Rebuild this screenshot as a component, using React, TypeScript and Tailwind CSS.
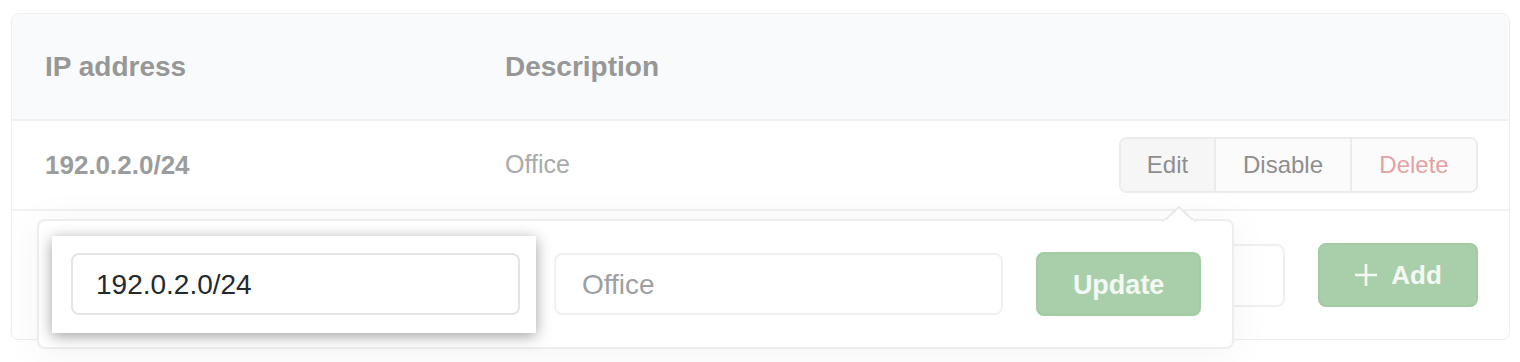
import React from 'react';

const font = { fontFamily: '"Liberation Sans", Arial, sans-serif' };

function PlusIcon() {
  return (
    <svg width="24" height="24" viewBox="0 0 24 24" className="shrink-0">
      <path d="M12 1v22M1 12h22" stroke="#f4f8f4" strokeWidth="2.6" />
    </svg>
  );
}

export default function App() {
  return (
    <div className="min-h-[362px] bg-white pt-[13px] pl-[11px] pr-[10px]" style={font}>
      {/* Table card */}
      <div className="relative w-[1499px] rounded-lg border border-[#eceef0]">
        {/* Header */}
        <div className="flex h-[107px] items-center rounded-t-lg border-b-2 border-[#f0f1f3] bg-[#f9fafb] px-[33px] text-[28px] font-bold text-[#979797]">
          <div className="w-[460px]">IP address</div>
          <div>Description</div>
        </div>

        {/* Row */}
        <div className="flex h-[90px] items-center border-b-2 border-[#f1f2f3] pl-[33px] pr-[31px]">
          <div className="w-[460px] text-[26px] font-bold text-[#9b9c9d]">192.0.2.0/24</div>
          <div className="text-[25px] text-[#a9aaab]">Office</div>
          <div className="ml-auto flex h-[56px] overflow-hidden rounded-lg border-2 border-[#ebebeb] text-[24px] text-[#8e8e8e]">
            <div className="flex w-[95px] items-center justify-center border-r-2 border-[#ebebeb] bg-[#f6f6f6]">Edit</div>
            <div className="flex w-[136px] items-center justify-center border-r-2 border-[#ebebeb] bg-[#fbfbfb]">Disable</div>
            <div className="flex w-[124px] items-center justify-center bg-[#fbfbfb] text-[#e3a1a4]">Delete</div>
          </div>
        </div>

        {/* Add row */}
        <div className="flex h-[128px] items-center gap-[33px] pl-[33px] pr-[31px]">
          <div className="h-[63px] flex-1 rounded-lg border-2 border-[#f0f0f0]" />
          <div className="h-[63px] flex-1 rounded-lg border-2 border-[#f0f0f0]" />
          <div className="flex h-[64px] w-[160px] items-center justify-center gap-[13px] rounded-lg border-2 border-[#a2caa3] bg-[#a9cfaa] text-[26px] font-bold text-[#f4f8f4]">
            <PlusIcon />
            Add
          </div>
        </div>

        {/* Edit popover */}
        <div className="absolute left-[25px] top-[205px] flex h-[130px] w-[1197px] items-center rounded-lg border-2 border-[#ededed] bg-white pl-[13px] pr-[31px] shadow-[0_4px_40px_rgba(0,0,0,0.05)]">
          <svg width="32" height="16" viewBox="0 0 32 16" className="absolute left-[1124px] top-[-15px]">
            <path d="M0 16 L16 1 L32 16" fill="white" stroke="#e8e8e8" strokeWidth="2" />
            <rect x="1" y="14" width="30" height="3" fill="white" />
          </svg>

          <div className="flex h-[97px] w-[484px] shrink-0 items-center bg-white pl-[19px] pr-[16px] shadow-[0_3px_14px_rgba(0,0,0,0.38)]">
            <div className="flex h-[62px] w-full items-center rounded-lg border-2 border-[#e3e4e8] bg-white pl-[23px] pt-[2px] text-[28px] text-[#24292e]">
              192.0.2.0/24
            </div>
          </div>

          <div className="ml-[18px] flex h-[62px] w-[450px] items-center rounded-lg border-2 border-[#f0f0f0] pl-[26px] pt-[2px] text-[28px] text-[#9d9fa1]">
            Office
          </div>

          <div className="ml-[33px] flex h-[64px] w-[165px] items-center justify-center rounded-lg border-2 border-[#a2caa3] bg-[#a9cfaa] pt-[2px] text-[27px] font-bold text-[#f4f8f4]">
            Update
          </div>
        </div>
      </div>
    </div>
  );
}
